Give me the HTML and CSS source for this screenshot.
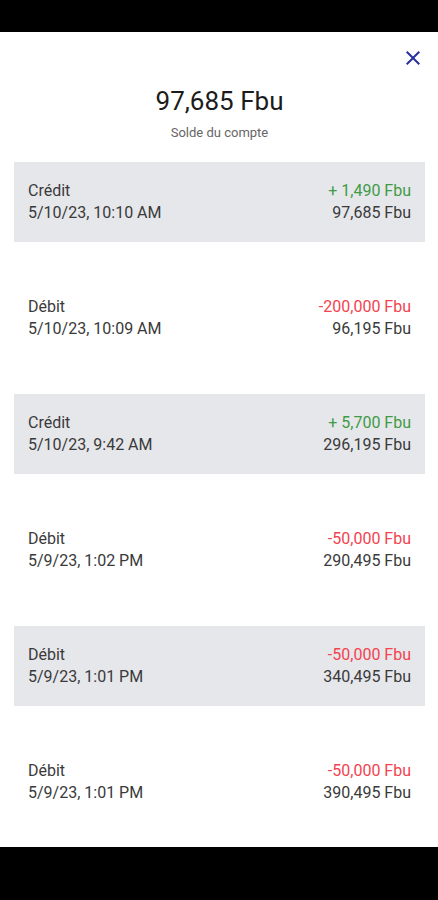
FILE: index.html
```html
<!DOCTYPE html>
<html lang="fr">
<head>
  <meta charset="UTF-8">
  <meta name="viewport" content="width=device-width, initial-scale=1.0">
  <title>Historique du compte</title>
  <link rel="stylesheet" href="styles.css">
</head>
<body>
  <div class="screen">
    <div class="status-bar"></div>

    <div class="content">
      <div class="close-row">
        <button class="close" aria-label="Fermer">
          <svg width="24" height="24" viewBox="0 0 24 24">
            <path d="M19 6.41 17.59 5 12 10.59 6.41 5 5 6.41 10.59 12 5 17.59 6.41 19 12 13.41 17.59 19 19 17.59 13.41 12z" fill="currentColor"/>
          </svg>
        </button>
      </div>

      <div class="balance">
        <div class="amount">97,685 Fbu</div>
        <div class="label">Solde du compte</div>
      </div>

      <ul class="list">
        <li class="item shaded">
          <div class="left">
            <span>Crédit</span>
            <span>5/10/23, 10:10 AM</span>
          </div>
          <div class="right">
            <span class="credit">+ 1,490 Fbu</span>
            <span>97,685 Fbu</span>
          </div>
        </li>
        <li class="item">
          <div class="left">
            <span>Débit</span>
            <span>5/10/23, 10:09 AM</span>
          </div>
          <div class="right">
            <span class="debit">-200,000 Fbu</span>
            <span>96,195 Fbu</span>
          </div>
        </li>
        <li class="item shaded">
          <div class="left">
            <span>Crédit</span>
            <span>5/10/23, 9:42 AM</span>
          </div>
          <div class="right">
            <span class="credit">+ 5,700 Fbu</span>
            <span>296,195 Fbu</span>
          </div>
        </li>
        <li class="item">
          <div class="left">
            <span>Débit</span>
            <span>5/9/23, 1:02 PM</span>
          </div>
          <div class="right">
            <span class="debit">-50,000 Fbu</span>
            <span>290,495 Fbu</span>
          </div>
        </li>
        <li class="item shaded">
          <div class="left">
            <span>Débit</span>
            <span>5/9/23, 1:01 PM</span>
          </div>
          <div class="right">
            <span class="debit">-50,000 Fbu</span>
            <span>340,495 Fbu</span>
          </div>
        </li>
        <li class="item">
          <div class="left">
            <span>Débit</span>
            <span>5/9/23, 1:01 PM</span>
          </div>
          <div class="right">
            <span class="debit">-50,000 Fbu</span>
            <span>390,495 Fbu</span>
          </div>
        </li>
      </ul>
    </div>

    <div class="nav-bar"></div>
  </div>
</body>
</html>
```

FILE: styles.css
```css
body {
  margin: 0;
  font-family: Roboto, "Liberation Sans", Arial, sans-serif;
  background-color: #fff;
  color: #3a3a3a;
}

.screen {
  display: flex;
  flex-direction: column;
  height: 900px;
  overflow: hidden;
}

.status-bar {
  height: 32px;
  background: #000;
  flex-shrink: 0;
}

.content {
  flex: 1;
  overflow: hidden;
  padding: 14px 13px 0 14px;
}

.close-row {
  display: flex;
  justify-content: flex-end;
  height: 24px;
}

.close {
  width: 24px;
  height: 24px;
  padding: 0;
  border: none;
  background: none;
  color: #27309c;
  cursor: pointer;
}

.balance {
  text-align: center;
  margin-top: 15px;
}

.amount {
  font-size: 26px;
  line-height: 32px;
  color: #1c1c1c;
}

.label {
  margin-top: 8px;
  font-size: 13px;
  line-height: 16px;
  color: #666;
}

.list {
  list-style: none;
  margin: 21px 0 0;
  padding: 0;
  display: flex;
  flex-direction: column;
  gap: 36px;
}

.item {
  height: 80px;
  box-sizing: border-box;
  padding: 18px 14px;
  display: flex;
  justify-content: space-between;
  font-size: 16px;
  line-height: 22px;
  color: #3a3a3a;
}

.item.shaded {
  background: #e6e7eb;
}

.left,
.right {
  display: flex;
  flex-direction: column;
}

.right {
  align-items: flex-end;
}

.credit {
  color: #3f9b45;
}

.debit {
  color: #f4424f;
}

.nav-bar {
  height: 53px;
  background: #000;
  flex-shrink: 0;
}
```
